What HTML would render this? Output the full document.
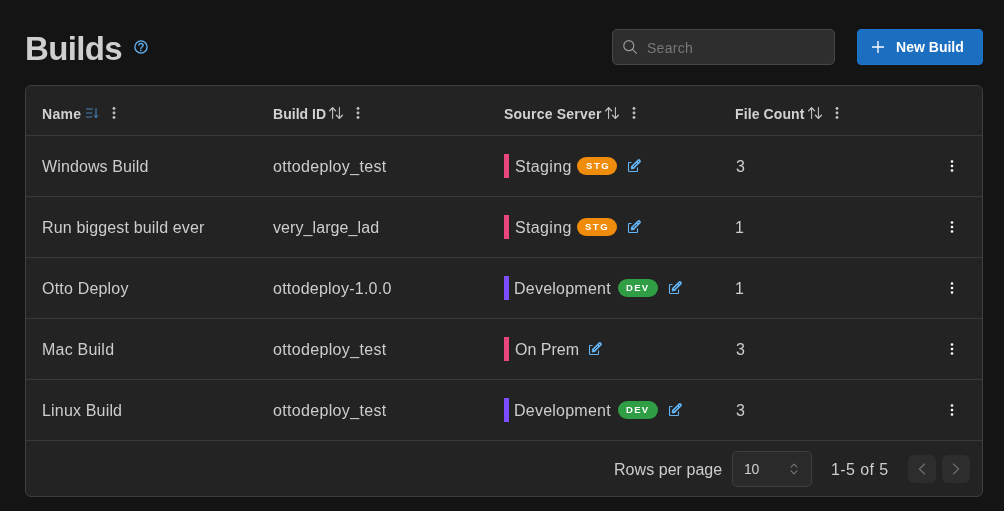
<!DOCTYPE html>
<html><head><meta charset="utf-8"><title>Builds</title>
<style>
*{box-sizing:border-box;margin:0;padding:0}
html,body{width:1004px;height:511px;overflow:hidden;background:#141414;font-family:"Liberation Sans",sans-serif;color:#d0d0d0}
div,svg{position:absolute}
.t{white-space:nowrap;will-change:transform}
.h1{font-size:33px;line-height:40px;font-weight:700;color:#cfcfcf}
.th{font-size:14px;line-height:18px;font-weight:700;color:#d2d2d2}
.td{font-size:16px;line-height:20px;color:#cdcdcd}
.sm{font-size:14px;line-height:18px;color:#d0d0d0}
.ph{color:#787878}
.nb{color:#fff;font-weight:700}
.bt{font-size:9.5px;line-height:18px;font-weight:700;color:#fff}
.search{left:612px;top:29px;width:223px;height:36px;background:#2e2e2e;border:1px solid #474747;border-radius:5px}
.btn{left:857px;top:29px;width:126px;height:36px;background:#1b6ec0;border:1px solid #1d74cc;border-radius:4px}
.card{left:25px;top:85px;width:958px;height:412px;background:#232323;border:1px solid #3e3e3e;border-radius:6px}
.hr{left:26px;width:956px;height:1px;background:#3a3a3a}
.bar{width:5px;height:24px;left:504px}
.pink{background:#e8467c}.purple{background:#7c4dff}
.badge{height:18px;width:40px;border-radius:9px}
.stg{background:#f08c0c;left:577px}.dev{background:#2f9e44;left:618px}
.sel{left:732px;top:451px;width:80px;height:36px;background:#2a2a2a;border:1px solid #3f3f3f;border-radius:5px}
.pg{top:455px;width:28px;height:28px;border-radius:6px;background:#2d2d2d}
</style></head><body>
<svg style="left:134px;top:40px;will-change:transform" width="14" height="14" viewBox="0 0 14 14"><circle cx="7" cy="7" r="6.1" fill="none" stroke="#64b5f6" stroke-width="1.3"/><text x="7" y="10.7" font-size="10.5" text-anchor="middle" fill="#64b5f6" stroke="#64b5f6" stroke-width=".35" font-family="Liberation Sans, sans-serif">?</text></svg>
<div class="search"></div>
<svg style="left:622px;top:39px" width="16" height="16" viewBox="0 0 16 16"><circle cx="6.8" cy="6.7" r="5" fill="none" stroke="#9a9a9a" stroke-width="1.2"/><path d="M10.4 10.4L14.4 14.4" stroke="#9a9a9a" stroke-width="1.2" stroke-linecap="round"/></svg>
<div class="btn"></div>
<svg style="left:872px;top:41px" width="12" height="12" viewBox="0 0 12 12"><path d="M6 .4V11.6M.4 6H11.6" stroke="#ffffff" stroke-width="1.35" stroke-linecap="round"/></svg>
<div class="card"></div>
<div class="hr" style="top:135px"></div>
<div class="hr" style="top:196px"></div>
<div class="hr" style="top:257px"></div>
<div class="hr" style="top:318px"></div>
<div class="hr" style="top:379px"></div>
<div class="hr" style="top:440px"></div>
<svg style="left:85px;top:106px" width="15" height="14" viewBox="0 0 15 14" fill="none" stroke="#4a8fd1"><path d="M1 3H8M1 7H7.2M1 11H7.2" stroke-width="1.15" opacity=".85"/><path d="M11 2.6V11.5M9.2 9.5L11 11.6L12.8 9.5" stroke-width=".95" stroke-linecap="round" stroke-linejoin="round"/></svg>
<svg style="left:329px;top:106px" width="14" height="14" viewBox="0 0 14 14" fill="none" stroke="#c6c6c6" stroke-linecap="round" stroke-linejoin="round"><path d="M3.6 12.4V1.9M10.4 1.6V12.4" stroke-width="1.05"/><path d="M.6 4.9L3.6 1.8L6.6 4.9M7.4 9.3L10.4 12.4L13.4 9.3" stroke-width="1.3"/></svg>
<svg style="left:605px;top:106px" width="14" height="14" viewBox="0 0 14 14" fill="none" stroke="#c6c6c6" stroke-linecap="round" stroke-linejoin="round"><path d="M3.6 12.4V1.9M10.4 1.6V12.4" stroke-width="1.05"/><path d="M.6 4.9L3.6 1.8L6.6 4.9M7.4 9.3L10.4 12.4L13.4 9.3" stroke-width="1.3"/></svg>
<svg style="left:808px;top:106px" width="14" height="14" viewBox="0 0 14 14" fill="none" stroke="#c6c6c6" stroke-linecap="round" stroke-linejoin="round"><path d="M3.6 12.4V1.9M10.4 1.6V12.4" stroke-width="1.05"/><path d="M.6 4.9L3.6 1.8L6.6 4.9M7.4 9.3L10.4 12.4L13.4 9.3" stroke-width="1.3"/></svg>
<svg style="left:111px;top:105px" width="6" height="16" viewBox="0 0 6 16" fill="#bdbdbd"><circle cx="3" cy="3.5" r="1.45"/><circle cx="3" cy="8" r="1.45"/><circle cx="3" cy="12.5" r="1.45"/></svg>
<svg style="left:355px;top:105px" width="6" height="16" viewBox="0 0 6 16" fill="#bdbdbd"><circle cx="3" cy="3.5" r="1.45"/><circle cx="3" cy="8" r="1.45"/><circle cx="3" cy="12.5" r="1.45"/></svg>
<svg style="left:631px;top:105px" width="6" height="16" viewBox="0 0 6 16" fill="#bdbdbd"><circle cx="3" cy="3.5" r="1.45"/><circle cx="3" cy="8" r="1.45"/><circle cx="3" cy="12.5" r="1.45"/></svg>
<svg style="left:834px;top:105px" width="6" height="16" viewBox="0 0 6 16" fill="#bdbdbd"><circle cx="3" cy="3.5" r="1.45"/><circle cx="3" cy="8" r="1.45"/><circle cx="3" cy="12.5" r="1.45"/></svg>
<div class="bar pink" style="top:154px"></div>
<div class="badge stg" style="top:157px"></div>
<svg style="left:627px;top:158px" width="16" height="16" viewBox="0 0 16 16" fill="none" stroke="#64b5f6" stroke-linecap="round" stroke-linejoin="round"><g transform="translate(.5 .5)"><path d="M3.6 4H1.7Q1 4 1 4.7V12.3Q1 13 1.7 13H9.3Q10 13 10 12.3V9.4" stroke-width="1.1"/><path d="M5.3 8.7L11.4 2.6" stroke-width="3.9"/><path d="M3.8 10.2L4.5 7.5L6.5 9.5Z" fill="#64b5f6" stroke-width=".8"/><path d="M5.8 8.1L9.1 4.8" stroke="#232323" stroke-width=".9"/><path d="M11 3L11.3 2.7" stroke="#232323" stroke-width="1"/></g></svg>
<svg style="left:949px;top:158px" width="6" height="16" viewBox="0 0 6 16" fill="#ffffff"><circle cx="3" cy="3.5" r="1.3"/><circle cx="3" cy="8" r="1.3"/><circle cx="3" cy="12.5" r="1.3"/></svg>
<div class="bar pink" style="top:215px"></div>
<div class="badge stg" style="top:218px"></div>
<svg style="left:627px;top:219px" width="16" height="16" viewBox="0 0 16 16" fill="none" stroke="#64b5f6" stroke-linecap="round" stroke-linejoin="round"><g transform="translate(.5 .5)"><path d="M3.6 4H1.7Q1 4 1 4.7V12.3Q1 13 1.7 13H9.3Q10 13 10 12.3V9.4" stroke-width="1.1"/><path d="M5.3 8.7L11.4 2.6" stroke-width="3.9"/><path d="M3.8 10.2L4.5 7.5L6.5 9.5Z" fill="#64b5f6" stroke-width=".8"/><path d="M5.8 8.1L9.1 4.8" stroke="#232323" stroke-width=".9"/><path d="M11 3L11.3 2.7" stroke="#232323" stroke-width="1"/></g></svg>
<svg style="left:949px;top:219px" width="6" height="16" viewBox="0 0 6 16" fill="#ffffff"><circle cx="3" cy="3.5" r="1.3"/><circle cx="3" cy="8" r="1.3"/><circle cx="3" cy="12.5" r="1.3"/></svg>
<div class="bar purple" style="top:276px"></div>
<div class="badge dev" style="top:279px"></div>
<svg style="left:668px;top:280px" width="16" height="16" viewBox="0 0 16 16" fill="none" stroke="#64b5f6" stroke-linecap="round" stroke-linejoin="round"><g transform="translate(.5 .5)"><path d="M3.6 4H1.7Q1 4 1 4.7V12.3Q1 13 1.7 13H9.3Q10 13 10 12.3V9.4" stroke-width="1.1"/><path d="M5.3 8.7L11.4 2.6" stroke-width="3.9"/><path d="M3.8 10.2L4.5 7.5L6.5 9.5Z" fill="#64b5f6" stroke-width=".8"/><path d="M5.8 8.1L9.1 4.8" stroke="#232323" stroke-width=".9"/><path d="M11 3L11.3 2.7" stroke="#232323" stroke-width="1"/></g></svg>
<svg style="left:949px;top:280px" width="6" height="16" viewBox="0 0 6 16" fill="#ffffff"><circle cx="3" cy="3.5" r="1.3"/><circle cx="3" cy="8" r="1.3"/><circle cx="3" cy="12.5" r="1.3"/></svg>
<div class="bar pink" style="top:337px"></div>
<svg style="left:588px;top:341px" width="16" height="16" viewBox="0 0 16 16" fill="none" stroke="#64b5f6" stroke-linecap="round" stroke-linejoin="round"><g transform="translate(.5 .5)"><path d="M3.6 4H1.7Q1 4 1 4.7V12.3Q1 13 1.7 13H9.3Q10 13 10 12.3V9.4" stroke-width="1.1"/><path d="M5.3 8.7L11.4 2.6" stroke-width="3.9"/><path d="M3.8 10.2L4.5 7.5L6.5 9.5Z" fill="#64b5f6" stroke-width=".8"/><path d="M5.8 8.1L9.1 4.8" stroke="#232323" stroke-width=".9"/><path d="M11 3L11.3 2.7" stroke="#232323" stroke-width="1"/></g></svg>
<svg style="left:949px;top:341px" width="6" height="16" viewBox="0 0 6 16" fill="#ffffff"><circle cx="3" cy="3.5" r="1.3"/><circle cx="3" cy="8" r="1.3"/><circle cx="3" cy="12.5" r="1.3"/></svg>
<div class="bar purple" style="top:398px"></div>
<div class="badge dev" style="top:401px"></div>
<svg style="left:668px;top:402px" width="16" height="16" viewBox="0 0 16 16" fill="none" stroke="#64b5f6" stroke-linecap="round" stroke-linejoin="round"><g transform="translate(.5 .5)"><path d="M3.6 4H1.7Q1 4 1 4.7V12.3Q1 13 1.7 13H9.3Q10 13 10 12.3V9.4" stroke-width="1.1"/><path d="M5.3 8.7L11.4 2.6" stroke-width="3.9"/><path d="M3.8 10.2L4.5 7.5L6.5 9.5Z" fill="#64b5f6" stroke-width=".8"/><path d="M5.8 8.1L9.1 4.8" stroke="#232323" stroke-width=".9"/><path d="M11 3L11.3 2.7" stroke="#232323" stroke-width="1"/></g></svg>
<svg style="left:949px;top:402px" width="6" height="16" viewBox="0 0 6 16" fill="#ffffff"><circle cx="3" cy="3.5" r="1.3"/><circle cx="3" cy="8" r="1.3"/><circle cx="3" cy="12.5" r="1.3"/></svg>
<div class="sel"></div>
<svg style="left:789px;top:462px" width="10" height="14" viewBox="0 0 10 14" fill="none" stroke="#777" stroke-width="1.1" stroke-linecap="round" stroke-linejoin="round"><path d="M2 5.2L5 2.2L8 5.2M2 8.8L5 11.8L8 8.8"/></svg>
<div class="pg" style="left:908px"></div><div class="pg" style="left:942px"></div>
<svg style="left:908px;top:455px" width="28" height="28" viewBox="0 0 28 28" fill="none" stroke="#6c6c6c" stroke-width="1.3" stroke-linecap="round" stroke-linejoin="round"><path d="M16.6 9L11.4 14L16.6 19"/></svg>
<svg style="left:942px;top:455px" width="28" height="28" viewBox="0 0 28 28" fill="none" stroke="#6c6c6c" stroke-width="1.3" stroke-linecap="round" stroke-linejoin="round"><path d="M11.4 9L16.6 14L11.4 19"/></svg>
<div class="t td" id="r0c0" style="left:42.00px;top:157px;letter-spacing:0.116px">Windows Build</div>
<div class="t td" id="r0c1" style="left:273.00px;top:157px;letter-spacing:0.334px">ottodeploy_test</div>
<div class="t td" id="r0c2" style="left:515.00px;top:157px;letter-spacing:0.361px">Staging</div>
<div class="t td" id="r0c3" style="left:736.00px;top:157px;letter-spacing:0.000px">3</div>
<div class="t td" id="r1c0" style="left:42.00px;top:218px;letter-spacing:0.151px">Run biggest build ever</div>
<div class="t td" id="r1c1" style="left:273.00px;top:218px;letter-spacing:0.087px">very_large_lad</div>
<div class="t td" id="r1c2" style="left:515.00px;top:218px;letter-spacing:0.361px">Staging</div>
<div class="t td" id="r1c3" style="left:735.00px;top:218px;letter-spacing:0.000px">1</div>
<div class="t td" id="r2c0" style="left:42.00px;top:279px;letter-spacing:0.191px">Otto Deploy</div>
<div class="t td" id="r2c1" style="left:273.00px;top:279px;letter-spacing:0.237px">ottodeploy-1.0.0</div>
<div class="t td" id="r2c2" style="left:514.00px;top:279px;letter-spacing:0.237px">Development</div>
<div class="t td" id="r2c3" style="left:735.00px;top:279px;letter-spacing:0.000px">1</div>
<div class="t td" id="r3c0" style="left:42.00px;top:340px;letter-spacing:0.224px">Mac Build</div>
<div class="t td" id="r3c1" style="left:273.00px;top:340px;letter-spacing:0.334px">ottodeploy_test</div>
<div class="t td" id="r3c2" style="left:515.00px;top:340px;letter-spacing:0.015px">On Prem</div>
<div class="t td" id="r3c3" style="left:736.00px;top:340px;letter-spacing:0.000px">3</div>
<div class="t td" id="r4c0" style="left:42.00px;top:401px;letter-spacing:0.175px">Linux Build</div>
<div class="t td" id="r4c1" style="left:273.00px;top:401px;letter-spacing:0.334px">ottodeploy_test</div>
<div class="t td" id="r4c2" style="left:514.00px;top:401px;letter-spacing:0.237px">Development</div>
<div class="t td" id="r4c3" style="left:736.00px;top:401px;letter-spacing:0.000px">3</div>
<div class="t th" id="h0" style="left:42.00px;top:105px;letter-spacing:0.330px">Name</div>
<div class="t th" id="h1" style="left:273.00px;top:105px;letter-spacing:0.037px">Build ID</div>
<div class="t th" id="h2" style="left:504.00px;top:105px;letter-spacing:0.205px">Source Server</div>
<div class="t th" id="h3" style="left:735.00px;top:105px;letter-spacing:0.113px">File Count</div>
<div class="t td" id="rpp" style="left:614.00px;top:460px;letter-spacing:0.050px">Rows per page</div>
<div class="t td" id="rng" style="left:831.00px;top:460px;letter-spacing:0.418px">1-5 of 5</div>
<div class="t sm" id="ten" style="left:744.00px;top:460px;letter-spacing:-0.387px">10</div>
<div class="t sm ph" id="srch" style="left:647.00px;top:39px;letter-spacing:0.272px">Search</div>
<div class="t sm nb" id="nb" style="left:896.00px;top:38px;letter-spacing:0.019px">New Build</div>
<div class="t h1" id="ttl" style="left:25.00px;top:29px;letter-spacing:-0.633px">Builds</div>
<div class="t bt" id="b0" style="left:586.00px;top:157px;letter-spacing:1.603px">STG</div>
<div class="t bt" id="b1" style="left:585.00px;top:218px;letter-spacing:1.527px">STG</div>
<div class="t bt" id="b2" style="left:626.00px;top:279px;letter-spacing:1.316px">DEV</div>
<div class="t bt" id="b4" style="left:626.00px;top:401px;letter-spacing:1.316px">DEV</div>

</body></html>
